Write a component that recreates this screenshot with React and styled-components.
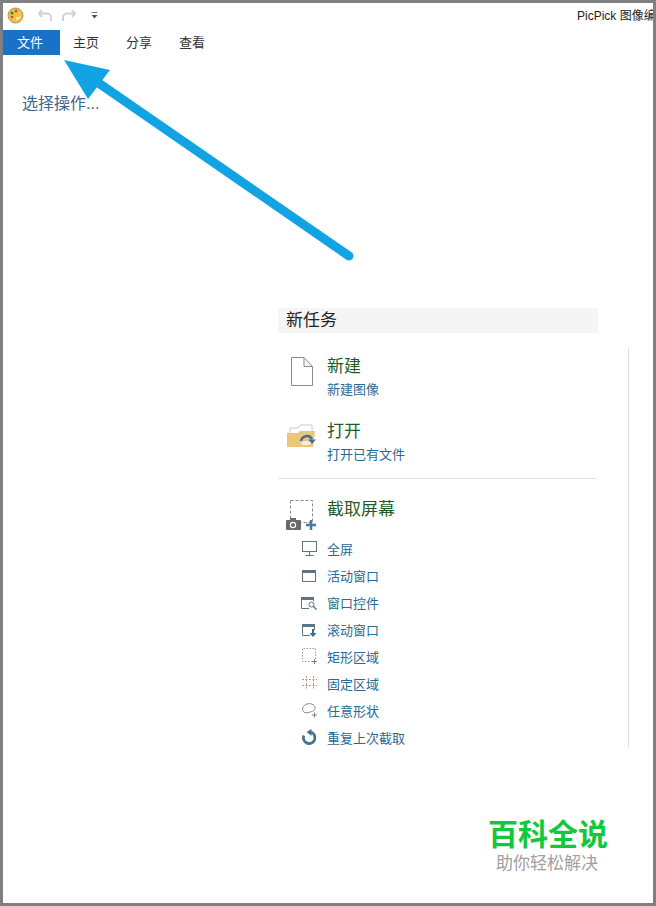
import React from "react";
import styled, { createGlobalStyle } from "styled-components";

const Global = createGlobalStyle`
  html, body { margin: 0; padding: 0; background: #fff; }
  body { font-family: "Liberation Sans", "Noto Sans CJK SC", sans-serif; }
`;
const Frame = styled.div`
  position: relative; box-sizing: border-box; width: 656px; height: 906px;
  border: 3px solid #808080; background: #fff; overflow: hidden;
`;
const TitleBar = styled.div`
  height: 27px; box-sizing: border-box; padding: 0 0 2px 4px; display: flex; align-items: center;
  justify-content: space-between; overflow: hidden;
`;
const QuickTools = styled.div`display: flex; align-items: center; gap: 6px;`;
const Title = styled.div`
  flex: none; width: 76px; overflow: hidden; white-space: nowrap; font-size: 12px; line-height: 16px; color: #222;
`;
const Tabs = styled.div`display: flex; height: 25px; align-items: stretch;`;
const Tab = styled.div`
  width: ${p => p.$w}px; box-sizing: border-box; padding: 0 ${p => p.$active ? 3 : 0}px 2px 0;
  display: flex; align-items: center; justify-content: center;
  font-size: 13px; color: ${p => p.$active ? "#fff" : "#333"};
  background: ${p => p.$active ? "#1a72c8" : "transparent"};
`;
const Content = styled.div`display: flex; align-items: flex-start;`;
const Side = styled.div`
  width: 275px; box-sizing: border-box; padding: 39px 0 0 19px; font-size: 16px; line-height: 20px; color: #42648c;
`;
const Panel = styled.div`margin-top: 253px; width: 351px;`;
const Heading = styled.div`
  width: 320px; height: 25px; box-sizing: border-box; background: #f5f5f5; padding-left: 8px;
  font-size: 17px; line-height: 25px; color: #222;
`;
const List = styled.div`
  margin-top: 15px; height: 399px; border-right: 1px solid #ddd; box-sizing: border-box; width: 351px;
`;
const Large = styled.div`
  display: flex; width: 320px; height: 65px; box-sizing: border-box; padding-top: 9px;
`;
const LargeIcon = styled.div`
  width: 49px; padding-left: ${p => p.$pl || 7}px; box-sizing: border-box; flex: none; padding-top: ${p => p.$pt || 0}px;
`;
const LargeTitle = styled.div`font-size: 17px; line-height: 20px; color: #1f5c28;`;
const LargeSub = styled.div`font-size: 13px; line-height: 16px; margin-top: 5px; color: #2a6a94;`;
const Divider = styled.div`width: 319px; height: 1px; background: #e2e2e2;`;
const Capture = styled.div`display: flex; height: 56px; padding-top: 21px; box-sizing: border-box;`;
const Rows = styled.div`display: flex; flex-direction: column;`;
const Row = styled.div`
  display: flex; align-items: center; height: 27px; box-sizing: border-box; padding-bottom: 1px;
  font-size: 13px; color: #2a6a94;
`;
const RowIcon = styled.div`width: 49px; padding-left: 23px; box-sizing: border-box; display: flex; flex: none;`;
const Arrow = styled.svg`position: absolute; left: -3px; top: -3px; pointer-events: none;`;
const Mark = styled.div`
  position: absolute; left: 465px; top: 814px; width: 160px; text-align: center;
`;
const MarkTitle = styled.div`
  font-size: 30px; line-height: 36px; font-weight: 700; color: #12c83c;
`;
const MarkSub = styled.div`font-size: 17px; line-height: 22px; color: #a0a0a0; margin-left: -2px;`;

const Smiley = () => (
  <svg width="17" height="17" viewBox="0 0 17 17">
    <circle cx="8.500" cy="8.500" r="7.500" fill="#f0c050" stroke="#a08040" strokeWidth=".8" />
    <circle cx="5" cy="6" r="1.600" fill="#4a8a2a" /><circle cx="9" cy="4" r="1.400" fill="#d04a2a" />
    <circle cx="5" cy="10" r="1.300" fill="#c0502a" /><path d="M9 13c2 0 4-1 5-4-2 1-3 1-5 1z" fill="#f7e8b0" />
  </svg>
);
const Undo = ({ flip }) => (
  <svg width="17" height="15" viewBox="0 0 17 15" fill="none" stroke="#d2d2d2" strokeWidth="2" style={flip ? { transform: "scaleX(-1)" } : undefined}>
    <path d="M5 2 2 5.500 5 9" /><path d="M2.500 5.500H10a4 4 0 0 1 4 4V13" />
  </svg>
);
const Drop = () => (
  <svg width="9" height="9" viewBox="0 0 9 9" style={{ marginLeft: 7 }}>
    <rect x="1.500" y="1" width="6" height="1" fill="#777" /><path d="M1.500 4h6l-3 3.500z" fill="#555" />
  </svg>
);
const Doc = () => (
  <svg width="24" height="30" viewBox="0 0 24 30" fill="#fff" stroke="#8a8a8a" strokeWidth="1">
    <path d="M1.500 .5H14L22.500 9.500V28.500H1.500z" /><path d="M14 .5V9.500H22.500" fill="none" />
  </svg>
);
const Folder = () => (
  <svg width="32" height="26" viewBox="0 0 32 26">
    <path d="M4 12V5h8l2-3h12v12z" fill="#fff" stroke="#c8c8c8" />
    <path d="M1 10h11l2-2h15l-2 16H1z" fill="#edc678" />
    <path d="M15 18a6 6 0 0 1 11-2" fill="none" stroke="#43709a" strokeWidth="2.500" />
    <path d="M22 16.500h8l-4 4.500z" fill="#43709a" /><ellipse cx="20" cy="20" rx="5" ry="2" fill="#fff" opacity=".7" />
  </svg>
);
const CaptureIcon = () => (
  <svg width="34" height="32" viewBox="0 0 34 32">
    <rect x="5.500" y=".5" width="22" height="22" fill="none" stroke="#888" strokeDasharray="3 2" />
    <rect x="1" y="20" width="15" height="10" rx="1" fill="#6a6a6a" /><rect x="5" y="18" width="6" height="3" fill="#6a6a6a" />
    <circle cx="8" cy="25" r="3.200" fill="#fff" /><circle cx="8" cy="25" r="2" fill="#6a6a6a" />
    <path d="M21 25h10M26 20v10" stroke="#4a7aa4" strokeWidth="2.500" />
  </svg>
);
const S = ({ children }) => <svg width="17" height="17" viewBox="0 0 17 17" fill="none">{children}</svg>;
const icons = [
  <S><rect x="1.500" y="1.500" width="14" height="10" fill="#fff" stroke="#5a7488" /><path d="M8.500 12v3" stroke="#5a7488" /><path d="M4.500 15.500h8" stroke="#5a7488" /></S>,
  <S><rect x="1.500" y="3.500" width="13" height="11" stroke="#5a7488" /><rect x="1" y="3" width="14" height="3" fill="#5a7488" /></S>,
  <S><path d="M8 14.500H.5v-11h12V7" stroke="#5a7488" /><rect x="0" y="3" width="13" height="3" fill="#5a7488" /><circle cx="10.500" cy="10.500" r="2.500" stroke="#5a7488" /><path d="m12.500 12.500 3 3" stroke="#5a7488" strokeWidth="1.600" /></S>,
  <S><path d="M9 14.500H1.500v-11h12V9" stroke="#5a7488" /><rect x="1" y="3" width="13" height="3" fill="#5a7488" /><path d="M12 8v5" stroke="#3a6a94" strokeWidth="2" /><path d="M8.500 12h7l-3.500 4z" fill="#3a6a94" /></S>,
  <S><path d="M14.500 11V.5H1.500v13H11" stroke="#999" strokeDasharray="1.500 1.500" /><path d="M11 13.500h5M13.500 11v5" stroke="#8a7a70" /></S>,
  <S><path d="M1 4.500h15M1 10.500h15M5.500 1v14M12.500 1v14" stroke="#b89880" strokeDasharray="2 1.500" /></S>,
  <S><path d="M3.500 10.500C0 8 1.500 3.500 6 2c3-1 6 0 7.500 2 1.500 2.500 0 5-3 5.500-2 .5-3 2-7 1z" stroke="#7a8a98" /><path d="M11 13h5M13.500 10.500v5" stroke="#8a7a70" /></S>,
  <S><path d="M2.800 6.500A5.800 5.800 0 1 0 10 3.200" stroke="#4a7494" strokeWidth="2.800" /><path d="M10.500 0v7L5.500 3z" fill="#4a7494" /></S>,
];
const rows = ["全屏", "活动窗口", "窗口控件", "滚动窗口", "矩形区域", "固定区域", "任意形状", "重复上次截取"];

export default function App() {
  return (
    <Frame>
      <Global />
      <TitleBar>
        <QuickTools>
          <Smiley />
          <span style={{ width: 1 }} />
          <Undo /><Undo flip /><Drop />
        </QuickTools>
        <Title>PicPick 图像编辑器</Title>
      </TitleBar>
      <Tabs>
        <Tab $active $w={57}>文件</Tab>
        <Tab $w={52}>主页</Tab>
        <Tab $w={54}>分享</Tab>
        <Tab $w={52}>查看</Tab>
      </Tabs>
      <Content>
        <Side>选择操作...</Side>
        <Panel>
          <Heading>新任务</Heading>
          <List>
            <Large>
              <LargeIcon $pl={12}><Doc /></LargeIcon>
              <div><LargeTitle>新建</LargeTitle><LargeSub>新建图像</LargeSub></div>
            </Large>
            <Large>
              <LargeIcon $pl={8} $pt={1}><Folder /></LargeIcon>
              <div><LargeTitle>打开</LargeTitle><LargeSub>打开已有文件</LargeSub></div>
            </Large>
            <Divider />
            <Capture>
              <LargeIcon><CaptureIcon /></LargeIcon>
              <LargeTitle>截取屏幕</LargeTitle>
            </Capture>
            <Rows>
              {rows.map((r, i) => (
                <Row key={r}><RowIcon>{icons[i]}</RowIcon>{r}</Row>
              ))}
            </Rows>
          </List>
        </Panel>
      </Content>
      <Mark>
        <MarkTitle>百科全说</MarkTitle>
        <MarkSub>助你轻松解决</MarkSub>
      </Mark>
      <Arrow width="656" height="906" viewBox="0 0 656 906">
        <path d="M349 256 100 84" stroke="#12a3e3" strokeWidth="9" strokeLinecap="round" fill="none" />
        <path d="M64 60 110 70 88 99z" fill="#12a3e3" />
      </Arrow>
    </Frame>
  );
}
